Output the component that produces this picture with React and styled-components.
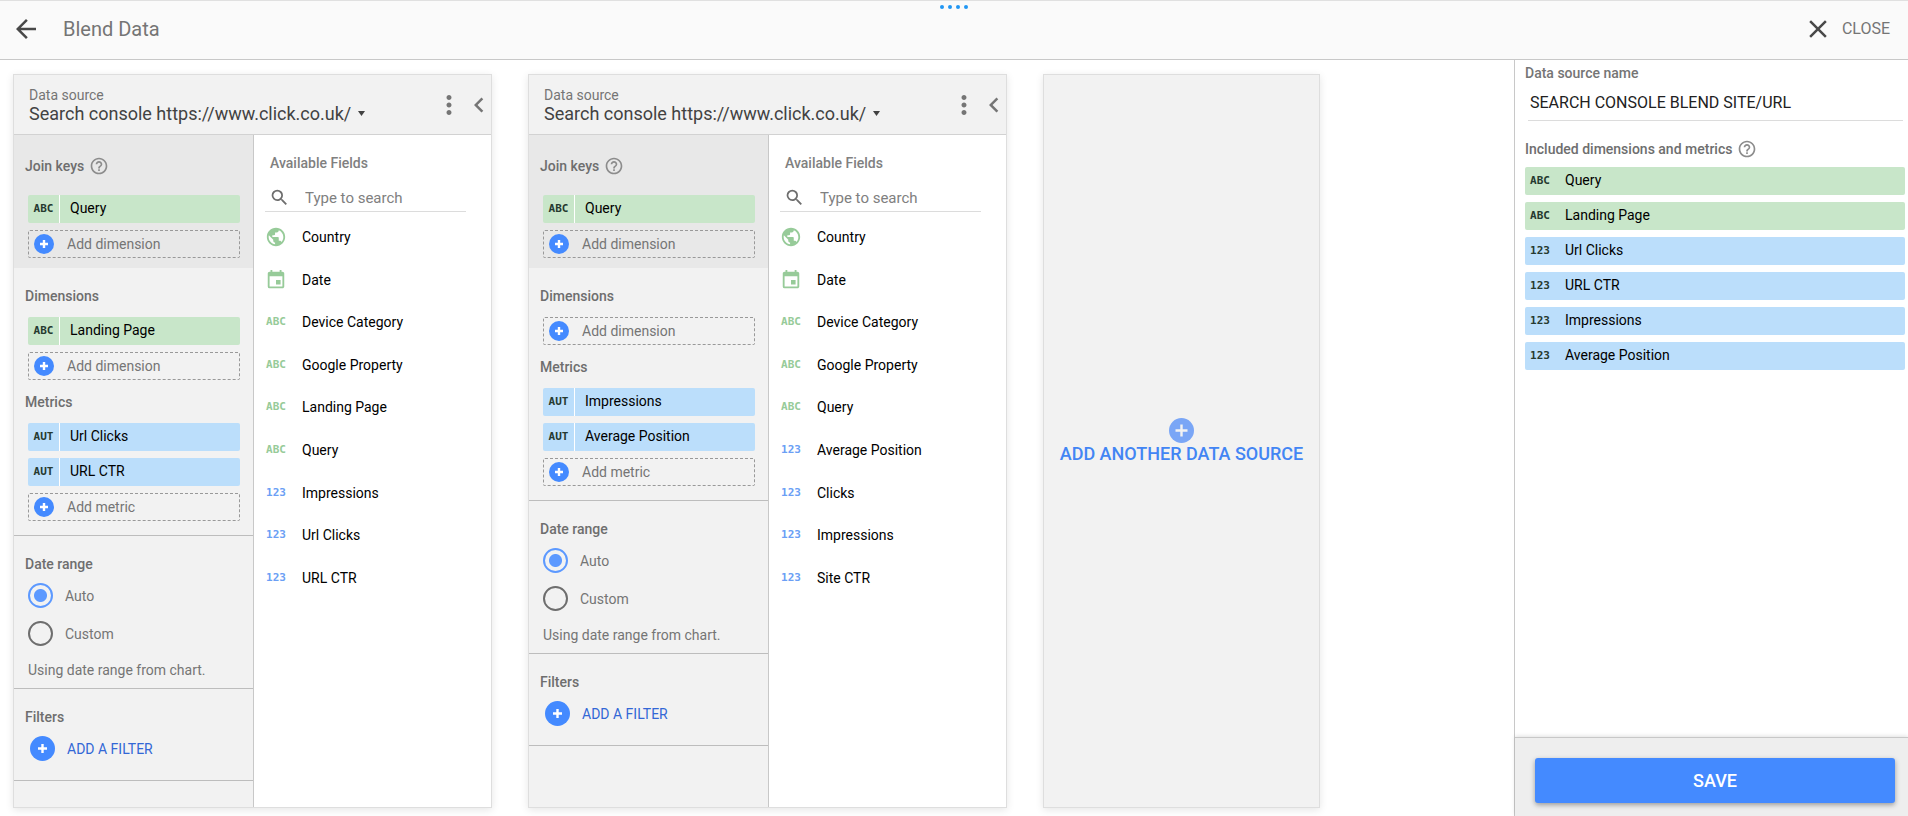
import React, { useState } from 'react';
import styled, { createGlobalStyle } from 'styled-components';
import {
  MdArrowBack,
  MdChevronLeft,
  MdClose,
  MdEvent,
  MdHelpOutline,
  MdMoreVert,
  MdPublic,
  MdSearch,
} from 'react-icons/md';

const GlobalStyle = createGlobalStyle`
  * {
    box-sizing: border-box;
  }

  body {
    margin: 0;
    background: #ffffff;
    color: #000000;
    font-family: Roboto, 'Liberation Sans', sans-serif;
    font-size: 14px;
    line-height: 20px;
  }

  button, input, select {
    margin: 0;
    padding: 0;
    border: 0;
    background: none;
    color: inherit;
    font: inherit;
  }

  button {
    cursor: pointer;
  }

  svg {
    display: block;
    flex: none;
  }
`;

const Page = styled.div`
  display: flex;
  flex-direction: column;
  min-height: 100vh;
`;

const TopBar = styled.header`
  position: relative;
  display: flex;
  align-items: center;
  justify-content: space-between;
  height: 60px;
  padding: 0 18px 2px 11px;
  border-top: 1px solid #e0e0e0;
  border-bottom: 1px solid #c8c8c8;
  background: #fafafa;
  color: #757575;
`;

const TopBarTitle = styled.div`
  display: flex;
  align-items: center;
  gap: 22px;
`;

const Title = styled.h1`
  margin: 0;
  font-size: 20px;
  font-weight: 400;
  line-height: 24px;
`;

const IconButton = styled.button`
  display: flex;
  justify-content: center;
  width: ${props => props.width || '30px'};
  color: ${props => props.tone || '#757575'};
`;

const CloseButton = styled.button`
  display: flex;
  align-items: center;
  gap: 9px;
  font-size: 16px;

  svg {
    color: #484848;
  }
`;

const DragHandle = styled.div`
  position: absolute;
  top: 4px;
  left: 50%;
  display: flex;
  gap: 4px;
  transform: translateX(-50%);
`;

const DragDot = styled.span`
  width: 4px;
  height: 4px;
  border-radius: 50%;
  background: #2196f3;
`;

const Workspace = styled.div`
  display: flex;
  flex: 1;
`;

const Canvas = styled.main`
  display: flex;
  flex: 1;
  gap: 36px;
  min-width: 0;
  padding: 14px 13px 8px;
`;

const Card = styled.section`
  display: flex;
  flex-direction: column;
  flex: 0 1 479px;
  border: 1px solid #dedede;
  background: #ffffff;
  box-shadow: 0 2px 8px rgba(0, 0, 0, 0.1);
`;

const CardHeader = styled.header`
  display: flex;
  align-items: center;
  gap: 6px;
  height: 60px;
  padding-left: 15px;
  border-bottom: 1px solid #d2d2d2;
  background: #f2f2f2;
`;

const SourcePicker = styled.label`
  flex: 1;
  color: #757575;
  line-height: 18px;
`;

const SourceValue = styled.span`
  display: flex;
  align-items: center;
  gap: 6px;
  color: #424242;
`;

const SourceSelect = styled.select`
  appearance: none;
  font-size: 18px;
  line-height: 20px;
`;

const CardBody = styled.div`
  display: grid;
  grid-template-columns: 240fr 237fr;
  flex: 1;
`;

const Setup = styled.div`
  min-width: 0;
  border-right: 1px solid #c8c8c8;
  background: #f2f2f2;
  color: #757575;
`;

const Section = styled.section`
  padding: 18px 13px ${props => props.bottom || '14px'} 14px;
  border-bottom: 1px solid #bdbdbd;
`;

const JoinSection = styled.section`
  padding: 21px 13px 10px 14px;
  background: #e8e8e8;
`;

const SectionTitle = styled.h2`
  display: flex;
  align-items: center;
  gap: 5px;
  margin: 0 0 ${props => props.space || '11px'} ${props => props.indent || '-3px'};
  color: #6e6e6e;
  font-size: 14px;
  font-weight: 500;
  line-height: 20px;

  svg {
    color: #8c8c8c;
  }
`;

const ChipList = styled.div`
  display: flex;
  flex-direction: column;
  gap: 7px;

  & + h2 {
    margin-top: 12px;
  }
`;

const Chip = styled.div`
  display: flex;
  height: 28px;
  border-radius: 2px;
  background: ${props => (props.metric ? '#bbdefb' : '#c8e6c9')};
  color: #000000;
  line-height: 27px;
`;

const ChipType = styled.span`
  display: flex;
  align-items: center;
  justify-content: center;
  width: ${props => (props.divided ? '32px' : '30px')};
  margin-right: 10px;
  ${props => (props.divided ? 'border-right: 1px solid #ffffff;' : '')}
`;

const TypeTag = styled.span`
  color: ${props => props.color};
  font-family: 'DejaVu Sans Mono', monospace;
  font-size: 11px;
  font-weight: 700;
  line-height: 12px;
`;

const AddButton = styled.button`
  display: flex;
  align-items: center;
  gap: 13px;
  height: 28px;
  padding: 0 5px;
  border: 1px dashed #999999;
  border-radius: 2px;
  color: #757575;
  text-align: left;
`;

const RadioRow = styled.label`
  display: flex;
  align-items: center;
  gap: 12px;
  height: 25px;
  margin-bottom: 13px;
`;

const Radio = styled.input`
  appearance: none;
  width: 25px;
  height: 25px;
  border: 2px solid #6e6e6e;
  border-radius: 50%;

  &:checked {
    border-color: #5c99ff;
    background: radial-gradient(circle, #5c99ff 6px, transparent 7px);
  }
`;

const Note = styled.p`
  margin: 14px 0 0;
`;

const FilterButton = styled.button`
  display: flex;
  align-items: center;
  gap: 12px;
  margin-left: 2px;
  color: #3367d6;
`;

const Fields = styled.div`
  min-width: 0;
  padding: 18px 25px 0 11px;
`;

const FieldsTitle = styled.h2`
  margin: 0 0 11px 5px;
  color: #808080;
  font-size: 14px;
  font-weight: 500;
  line-height: 20px;
`;

const SearchBox = styled.label`
  display: flex;
  align-items: center;
  gap: 15px;
  height: 28px;
  padding-left: 4px;
  border-bottom: 1px solid #dcdcdc;
  color: #6e6e6e;
`;

const SearchInput = styled.input`
  min-width: 0;
  flex: 1;
  font-size: 15px;
  outline: none;

  &::placeholder {
    color: #808080;
    opacity: 1;
  }
`;

const FieldList = styled.ul`
  display: grid;
  grid-auto-rows: 1fr;
  height: 383px;
  margin: 4px 0 0;
  padding: 0;
  list-style: none;
`;

const Field = styled.li`
  display: flex;
  align-items: center;
`;

const FieldIcon = styled.span`
  display: flex;
  justify-content: center;
  width: 22px;
  margin-right: 15px;
  color: #97cb99;
`;

const AddSource = styled.button`
  display: flex;
  flex: 0 1 277px;
  flex-direction: column;
  align-items: center;
  justify-content: center;
  border: 1px solid #dedede;
  background: #f2f2f2;
  box-shadow: 0 2px 8px rgba(0, 0, 0, 0.1);
  color: #4285f4;
  font-size: 18px;
  font-weight: 500;
  line-height: 22px;
`;

const Sidebar = styled.aside`
  display: flex;
  flex-direction: column;
  width: 394px;
  border-left: 1px solid #c8c8c8;
`;

const SidebarBody = styled.div`
  flex: 1;
  padding: 3px 3px 0 10px;
`;

const NameField = styled.label`
  display: block;
  margin-bottom: 18px;
  color: #757575;
  font-weight: 500;
`;

const NameInput = styled.input`
  display: block;
  width: calc(100% - 5px);
  height: 38px;
  margin-left: 3px;
  padding: 1px 2px 0;
  border-bottom: 1px solid #dcdcdc;
  color: #212121;
  font-size: 16px;
  font-weight: 400;
`;

const SidebarFooter = styled.footer`
  padding: 20px 13px 13px 20px;
  border-top: 1px solid #c8c8c8;
  background: #eeeeee;
  box-shadow: 0 -1px 4px rgba(0, 0, 0, 0.12);
`;

const SaveButton = styled.button`
  width: 100%;
  height: 45px;
  border-radius: 3px;
  background: #448aff;
  box-shadow: 0 2px 5px rgba(0, 0, 0, 0.35);
  color: #ffffff;
  font-size: 18px;
  font-weight: 500;
`;

const TAGS = { text: 'ABC', number: '123', auto: 'AUT' };

const PlusCircle = ({ size = 20, arm = 4, fill = '#448aff', cross = '#ffffff' }) => (
  <svg width={size} height={size} viewBox={`0 0 ${size} ${size}`} aria-hidden="true">
    <circle cx={size / 2} cy={size / 2} r={size / 2} fill={fill} />
    <path
      d={`M${size / 2 - arm} ${size / 2}h${arm * 2}M${size / 2} ${size / 2 -
        arm}v${arm * 2}`}
      stroke={cross}
      strokeWidth="2.4"
    />
  </svg>
);

const FieldChip = ({ type, label, divided }) => (
  <Chip metric={type !== 'text' ? 1 : undefined}>
    <ChipType divided={divided ? 1 : undefined}>
      <TypeTag color="#263a30">{TAGS[type]}</TypeTag>
    </ChipType>
    {label}
  </Chip>
);

const AvailableField = ({ type, label }) => (
  <Field>
    <FieldIcon>
      {type === 'geo' && <MdPublic size={22} />}
      {type === 'date' && <MdEvent size={22} />}
      {TAGS[type] && (
        <TypeTag color={type === 'text' ? '#97cb99' : '#6b9ff5'}>
          {TAGS[type]}
        </TypeTag>
      )}
    </FieldIcon>
    {label}
  </Field>
);

const SourceCard = ({ id, dimensions, metrics, fields }) => {
  const [range, setRange] = useState('Auto');
  const name = 'Search console https://www.click.co.uk/';

  return (
    <Card>
      <CardHeader>
        <SourcePicker>
          Data source
          <SourceValue>
            <SourceSelect>
              <option>{name}</option>
            </SourceSelect>
            <svg width="7" height="5" viewBox="0 0 7 5" aria-hidden="true">
              <path d="M0 0h7L3.5 5z" fill="#424242" />
            </svg>
          </SourceValue>
        </SourcePicker>
        <IconButton width="24px" aria-label="More options">
          <MdMoreVert size={30} />
        </IconButton>
        <IconButton width="24px" aria-label="Collapse">
          <MdChevronLeft size={30} />
        </IconButton>
      </CardHeader>
      <CardBody>
        <Setup>
          <JoinSection>
            <SectionTitle space="19px">
              Join keys <MdHelpOutline size={20} />
            </SectionTitle>
            <ChipList>
              <FieldChip type="text" label="Query" divided />
              <AddButton>
                <PlusCircle /> Add dimension
              </AddButton>
            </ChipList>
          </JoinSection>
          <Section>
            <SectionTitle>Dimensions</SectionTitle>
            <ChipList>
              {dimensions.map(d => (
                <FieldChip key={d} type="text" label={d} divided />
              ))}
              <AddButton>
                <PlusCircle /> Add dimension
              </AddButton>
            </ChipList>
            <SectionTitle>Metrics</SectionTitle>
            <ChipList>
              {metrics.map(m => (
                <FieldChip key={m} type="auto" label={m} divided />
              ))}
              <AddButton>
                <PlusCircle /> Add metric
              </AddButton>
            </ChipList>
          </Section>
          <Section bottom="8px">
            <SectionTitle space="9px">Date range</SectionTitle>
            {['Auto', 'Custom'].map(option => (
              <RadioRow key={option}>
                <Radio
                  type="radio"
                  name={`range-${id}`}
                  checked={range === option}
                  onChange={() => setRange(option)}
                />
                {option}
              </RadioRow>
            ))}
            <Note>Using date range from chart.</Note>
          </Section>
          <Section bottom="19px">
            <SectionTitle space="9px">Filters</SectionTitle>
            <FilterButton>
              <PlusCircle size={25} arm={4.5} /> ADD A FILTER
            </FilterButton>
          </Section>
        </Setup>
        <Fields>
          <FieldsTitle>Available Fields</FieldsTitle>
          <SearchBox>
            <MdSearch size={21} />
            <SearchInput placeholder="Type to search" aria-label="Search fields" />
          </SearchBox>
          <FieldList>
            {fields.map(([type, label]) => (
              <AvailableField key={label} type={type} label={label} />
            ))}
          </FieldList>
        </Fields>
      </CardBody>
    </Card>
  );
};

const sources = [
  {
    id: 'url',
    dimensions: ['Landing Page'],
    metrics: ['Url Clicks', 'URL CTR'],
    fields: [
      ['geo', 'Country'],
      ['date', 'Date'],
      ['text', 'Device Category'],
      ['text', 'Google Property'],
      ['text', 'Landing Page'],
      ['text', 'Query'],
      ['number', 'Impressions'],
      ['number', 'Url Clicks'],
      ['number', 'URL CTR'],
    ],
  },
  {
    id: 'site',
    dimensions: [],
    metrics: ['Impressions', 'Average Position'],
    fields: [
      ['geo', 'Country'],
      ['date', 'Date'],
      ['text', 'Device Category'],
      ['text', 'Google Property'],
      ['text', 'Query'],
      ['number', 'Average Position'],
      ['number', 'Clicks'],
      ['number', 'Impressions'],
      ['number', 'Site CTR'],
    ],
  },
];

const included = [
  ['text', 'Query'],
  ['text', 'Landing Page'],
  ['number', 'Url Clicks'],
  ['number', 'URL CTR'],
  ['number', 'Impressions'],
  ['number', 'Average Position'],
];

const App = () => (
  <Page>
    <GlobalStyle />
    <TopBar>
      <TopBarTitle>
        <IconButton tone="#484848" aria-label="Back">
          <MdArrowBack size={30} />
        </IconButton>
        <Title>Blend Data</Title>
      </TopBarTitle>
      <DragHandle>
        <DragDot />
        <DragDot />
        <DragDot />
        <DragDot />
      </DragHandle>
      <CloseButton>
        <MdClose size={30} /> CLOSE
      </CloseButton>
    </TopBar>
    <Workspace>
      <Canvas>
        {sources.map(source => (
          <SourceCard key={source.id} {...source} />
        ))}
        <AddSource>
          <PlusCircle size={25} arm={6} fill="#7aa6f6" cross="#f2f2f2" />
          ADD ANOTHER DATA SOURCE
        </AddSource>
      </Canvas>
      <Sidebar>
        <SidebarBody>
          <NameField>
            Data source name
            <NameInput defaultValue="SEARCH CONSOLE BLEND SITE/URL" />
          </NameField>
          <SectionTitle space="8px" indent="0">
            Included dimensions and metrics <MdHelpOutline size={20} />
          </SectionTitle>
          <ChipList>
            {included.map(([type, label]) => (
              <FieldChip key={label} type={type} label={label} />
            ))}
          </ChipList>
        </SidebarBody>
        <SidebarFooter>
          <SaveButton>SAVE</SaveButton>
        </SidebarFooter>
      </Sidebar>
    </Workspace>
  </Page>
);

export default App;
